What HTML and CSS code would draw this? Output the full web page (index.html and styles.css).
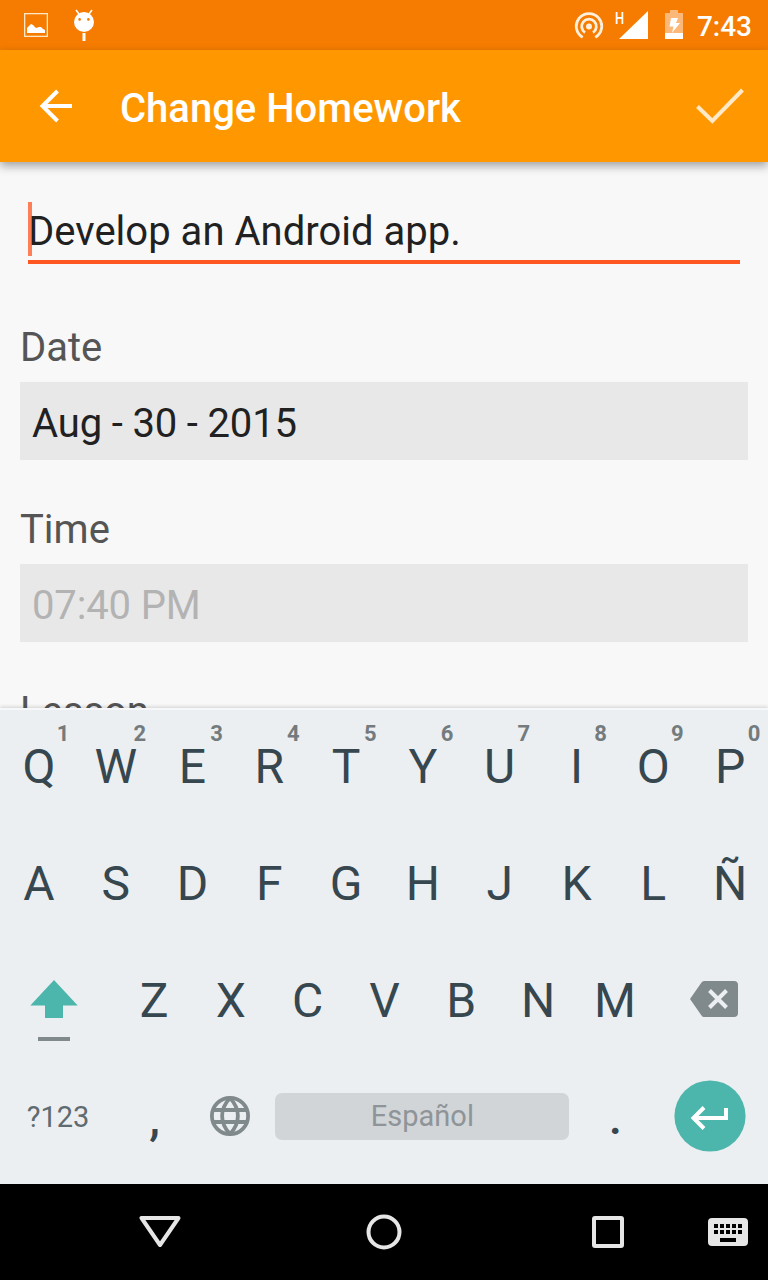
FILE: index.html
```html
<!DOCTYPE html>
<html lang="en">
<head>
    <meta charset="UTF-8">
    <meta name="viewport" content="width=device-width, initial-scale=1.0">
    <title>Change Homework</title>
    <link rel="stylesheet" href="styles.css">
</head>
<body>
    <div class="status-bar">
        <svg class="status-image" width="24" height="24" viewBox="0 0 24 24">
            <rect x="0.6" y="0.6" width="22.8" height="22.8" fill="none" stroke="#ffe6c4" stroke-width="1.4"/>
            <path d="M3 20v-5l2-2 2-2 2 1 3 3 3-1 2 0 2 2 2 1v3z" fill="#fff"/>
        </svg>
        <svg class="status-droid" width="22" height="32" viewBox="0 0 22 32">
            <path d="M3 1l3 4M19 1l-3 4" stroke="#fff" stroke-width="1.6"/>
            <circle cx="11" cy="13" r="10" fill="#fff"/>
            <circle cx="6.6" cy="10.4" r="1.3" fill="#f57c00"/>
            <circle cx="15.4" cy="10.4" r="1.3" fill="#f57c00"/>
            <path d="M11 24v8" stroke="#fff" stroke-width="3"/>
        </svg>
        <div class="status-right">
            <svg class="status-cast" width="30" height="28" viewBox="0 0 30 28">
                <g fill="none" stroke="#ffefdb" stroke-width="2.8">
                    <path d="M8.700 25.400a12.700 12.700 0 1 1 12.600 0"/>
                    <path d="M11 20.600a7.300 7.300 0 1 1 8 0"/>
                </g>
                <circle cx="15" cy="14.5" r="3" fill="#ffefdb"/>
            </svg>
            <svg class="status-signal" width="34" height="30" viewBox="0 0 34 30">
                <path d="M33 1v28H4z" fill="#fff"/>
                <text class="signal-type" transform="translate(0 13.500) scale(0.760 1)">H</text>
            </svg>
            <svg class="status-battery" width="20" height="30" viewBox="0 0 20 30">
                <path d="M6 0h8v3h5v20.500H1V3h5z" fill="#fbb878"/>
                <path d="M1 23h18v6H1z" fill="#fff"/>
                <path d="M7 8h7l-2 5h4l-8 10 1.500-6.500H5.500z" fill="#fff"/>
            </svg>
            <span class="clock">7:43</span>
        </div>
    </div>
    <div class="app-bar">
        <svg class="back" width="34" height="34" viewBox="0 0 34 34">
            <path d="M18.500 2L3.500 17l15 15M3.500 17H33" fill="none" stroke="#fff" stroke-width="4"/>
        </svg>
        <h1>Change Homework</h1>
        <svg class="done" width="50" height="38" viewBox="0 0 50 38">
            <path d="M2.500 19.500L17.300 34 47.500 3" fill="none" stroke="#ffe9c9" stroke-width="4"/>
        </svg>
    </div>

    <div class="form">
        <div class="title-input">Develop an Android app.<span class="cursor"></span></div>
        <div class="label">Date</div>
        <div class="picker">Aug - 30 - 2015</div>
        <div class="label">Time</div>
        <div class="picker disabled">07:40 PM</div>
        <div class="label">Lesson</div>
    </div>

    <div class="keyboard">
        <div class="key-row">
            <div class="key">Q<span class="hint">1</span></div>
            <div class="key">W<span class="hint">2</span></div>
            <div class="key">E<span class="hint">3</span></div>
            <div class="key">R<span class="hint">4</span></div>
            <div class="key">T<span class="hint">5</span></div>
            <div class="key">Y<span class="hint">6</span></div>
            <div class="key">U<span class="hint">7</span></div>
            <div class="key">I<span class="hint">8</span></div>
            <div class="key">O<span class="hint">9</span></div>
            <div class="key">P<span class="hint">0</span></div>
        </div>
        <div class="key-row">
            <div class="key">A</div>
            <div class="key">S</div>
            <div class="key">D</div>
            <div class="key">F</div>
            <div class="key">G</div>
            <div class="key">H</div>
            <div class="key">J</div>
            <div class="key">K</div>
            <div class="key">L</div>
            <div class="key">Ñ</div>
        </div>
        <div class="key-row">
            <div class="key wide shift">
                <svg width="48" height="62" viewBox="0 0 48 62">
                    <path d="M24 0l23.700 25.500H33V38H15V25.500H0.300z" fill="#4db6ac"/>
                    <path d="M8 57h32v4H8z" fill="#80898c"/>
                </svg>
            </div>
            <div class="key">Z</div>
            <div class="key">X</div>
            <div class="key">C</div>
            <div class="key">V</div>
            <div class="key">B</div>
            <div class="key">N</div>
            <div class="key">M</div>
            <div class="key wide delete">
                <svg width="48" height="36" viewBox="0 0 48 36">
                    <path d="M14 0H44a4 4 0 0 1 4 4V32a4 4 0 0 1-4 4H14q-1.500 0-2.500-1.500L0 18 11.500 1.500Q12.500 0 14 0z" fill="#80898c"/>
                    <path d="M19.500 9.500l17 17M36.500 9.500l-17 17" stroke="#eceff1" stroke-width="4"/>
                </svg>
            </div>
        </div>
        <div class="key-row">
            <div class="key wide symbols">?123</div>
            <div class="key punctuation">,</div>
            <div class="key globe">
                <svg width="40" height="40" viewBox="0 0 40 40">
                    <g fill="none" stroke="#80898c" stroke-width="3.800">
                        <circle cx="20" cy="20" r="18.100"/>
                        <path d="M20 2C9.500 13 9.500 27 20 38C30.500 27 30.500 13 20 2z"/>
                        <path d="M3 14h34M3 26h34"/>
                    </g>
                </svg>
            </div>
            <div class="space"><span>Español</span></div>
            <div class="key punctuation">.</div>
            <div class="key wide enter">
                <svg width="72" height="72" viewBox="0 0 72 72">
                    <circle cx="36" cy="36" r="35.600" fill="#4db6ac"/>
                    <path d="M30 27.500L19.500 38 30 48.500M19.500 38H52V28" fill="none" stroke="#fff" stroke-width="4"/>
                </svg>
            </div>
        </div>
    </div>

    <div class="nav-bar">
        <svg width="42" height="34" viewBox="0 0 42 34">
            <path d="M2.500 3h37L21 30z" fill="none" stroke="#e6e6e6" stroke-width="4" stroke-linejoin="round"/>
        </svg>
        <svg class="home" width="36" height="36" viewBox="0 0 36 36">
            <circle cx="18" cy="18" r="15.500" fill="none" stroke="#e6e6e6" stroke-width="4"/>
        </svg>
        <svg class="recents" width="32" height="32" viewBox="0 0 32 32">
            <rect x="2" y="2" width="28" height="28" rx="1" fill="none" stroke="#e6e6e6" stroke-width="4"/>
        </svg>
        <svg class="ime" width="40" height="28" viewBox="0 0 40 28">
            <rect width="40" height="28" rx="4" fill="#e6e6e6"/>
            <path d="M6 8h28M6 14h28" stroke="#000" stroke-width="4" stroke-dasharray="4 2"/>
            <path d="M12 22h16" stroke="#000" stroke-width="4"/>
        </svg>
    </div>
</body>
</html>
```
FILE: styles.css
```css
body {
    margin: 0;
    width: 768px;
    height: 1280px;
    display: flex;
    flex-direction: column;
    overflow: hidden;
    background-color: #f8f8f8;
    font-family: Roboto, "Liberation Sans", sans-serif;
}
svg {
    display: block;
    flex: none;
}

/* top bars */
.status-bar {
    flex: none;
    display: flex;
    height: 50px;
    background-color: #f57c00;
}
.status-image {
    margin: 13px 0 0 24px;
}
.status-droid {
    margin: 9px 0 0 25px;
}
.status-right {
    display: flex;
    margin-left: auto;
    padding-right: 16px;
}
.status-cast {
    margin: 12px 11px 0 0;
}
.status-signal {
    margin: 10px 15px 0 0;
    overflow: visible;
}
.signal-type {
    font-size: 17px;
    font-weight: 500;
    fill: #fff;
}
.status-battery {
    margin: 10px 13px 0 0;
}
.clock {
    color: #fff;
    font-size: 28px;
    font-weight: 500;
    line-height: 53px;
}
.app-bar {
    flex: none;
    position: relative;
    z-index: 1;
    display: flex;
    height: 112px;
    background-color: #ff9800;
    box-shadow: 0 4px 9px rgba(0, 0, 0, 0.35);
}
.back {
    margin: 39px 0 0 39px;
}
.app-bar h1 {
    margin: 0 0 0 47px;
    color: #fff;
    font-size: 40px;
    font-weight: 500;
    line-height: 118px;
}
.done {
    margin: 37px 23px 0 auto;
}

/* form */
.form {
    flex: none;
    height: 546px;
    box-sizing: border-box;
    padding: 40px 20px 0;
    overflow: hidden;
    font-size: 40px;
}
.title-input {
    position: relative;
    height: 58px;
    margin: 0 8px 58px;
    border-bottom: 4px solid #ff5722;
    color: #212121;
    letter-spacing: 0.02px;
    line-height: 60px;
}
.cursor {
    position: absolute;
    left: 0;
    top: 0;
    width: 4px;
    height: 54px;
    background-color: rgba(255, 87, 34, 0.75);
}
.label {
    height: 60px;
    color: #555;
    line-height: 52px;
}
.picker {
    height: 78px;
    margin-bottom: 44px;
    padding-left: 12px;
    background-color: #e8e8e8;
    color: #212121;
    letter-spacing: -0.15px;
    line-height: 84px;
}
.picker.disabled {
    color: #b3b3b3;
}

/* keyboard */
.keyboard {
    flex: none;
    position: relative;
    height: 476px;
    box-sizing: border-box;
    border-top: 2px solid #f6f7f8;
    background-color: #eceff1;
    box-shadow: 0 -1px 4px rgba(0, 0, 0, 0.16);
}
.key-row {
    display: flex;
    height: 117px;
}
.key {
    position: relative;
    width: 76.8px;
    box-sizing: border-box;
    padding-left: 1px;
    color: #37474f;
    font-size: 48px;
    line-height: 113px;
    text-align: center;
}
.key.wide {
    width: 115.2px;
}
.hint {
    position: absolute;
    top: 16px;
    left: 53px;
    width: 20px;
    color: #737b7e;
    font-size: 22px;
    font-weight: 700;
    line-height: 15px;
}
.shift svg {
    margin: 36px 0 0 29px;
}
.delete svg {
    margin: 37px 0 0 36px;
}
.key.symbols {
    color: #5f6b70;
    font-size: 29px;
}
.key.punctuation {
    padding-left: 2px;
    font-weight: 500;
}
.globe svg {
    margin: 35px 0 0 17px;
}
.space {
    width: 307.2px;
    display: flex;
    justify-content: center;
    padding-top: 32px;
    box-sizing: border-box;
}
.space span {
    width: 294px;
    height: 47px;
    border-radius: 7px;
    background-color: #d1d5d7;
    color: #8e9497;
    font-size: 29px;
    line-height: 46px;
    text-align: center;
}
.enter svg {
    margin: 19px 0 0 20px;
}

/* system navigation */
.nav-bar {
    flex: none;
    height: 96px;
    display: flex;
    align-items: center;
    box-sizing: border-box;
    padding: 0 20px 0 139px;
    background-color: #000;
}
.home {
    margin-left: 185px;
}
.recents {
    margin-left: 190px;
}
.ime {
    margin-left: auto;
}
```
